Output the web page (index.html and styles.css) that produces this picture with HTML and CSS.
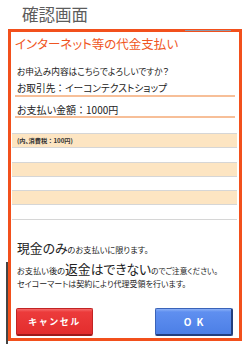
FILE: index.html
```html
<!DOCTYPE html>
<html lang="ja">
<head>
<meta charset="utf-8">
<link rel="stylesheet" href="styles.css">
</head>
<body>
<div class="title">確認画面</div>
<div class="frame">
  <div class="heading">インターネット等の代金支払い</div>
  <div class="question">お申込み内容はこちらでよろしいですか？</div>
  <div class="field f1">お取引先<span class="c">：</span>イーコンテクストショップ</div>
  <div class="field f2">お支払い金額<span class="c">：</span>1000円</div>
  <div class="rows">
    <div class="row beige"><span class="tax">(内、消費税<span class="c">：</span>100円)</span></div>
    <div class="row"></div>
    <div class="row beige"></div>
    <div class="row"></div>
    <div class="row beige"></div>
    <div class="row"></div>
  </div>
  <div class="notice">
    <div class="line n1"><span class="big">現金のみ</span><span class="small">のお支払いに限ります。</span></div>
    <div class="line n2"><span class="small">お支払い後の</span><span class="big">返金はできない</span><span class="small2">のでご注意ください。</span></div>
    <div class="line n3">セイコーマートは契約により代理受領を行います。</div>
  </div>
  <div class="buttons">
    <div class="btn cancel">キャンセル</div>
    <div class="btn ok">OK</div>
  </div>
</div>
</body>
</html>
```
FILE: styles.css
```css
html, body {
  margin: 0;
  padding: 0;
  background: #ffffff;
}
body {
  width: 250px;
  height: 350px;
  overflow: hidden;
  font-family: "Noto Sans CJK JP", "Noto Sans", sans-serif;
  font-feature-settings: "palt";
  color: #222;
}
.c { font-feature-settings: normal; }
.title {
  height: 29px;
  box-sizing: border-box;
  padding: 4px 0 0 22px;
  font-size: 16.5px;
  line-height: 20px;
  color: #5c5c5c;
}
.frame {
  position: relative;
  margin: 0 8px;
  height: 312px;
  box-sizing: border-box;
  border: 3px solid #f2501c;
  display: flex;
  flex-direction: column;
}
.frame::before {
  content: "";
  position: absolute;
  top: -2px;
  left: 174px;
  width: 46px;
  height: 1px;
  background: #8a9ab0;
}
.frame::after {
  content: "";
  position: absolute;
  left: -5px;
  top: 230px;
  width: 2px;
  height: 82px;
  background: #444;
}
.heading {
  height: 24px;
  line-height: 24px;
  padding-left: 4px;
  font-size: 12.5px;
  color: #ef5522;
}
.question {
  margin-top: 8px;
  height: 16px;
  line-height: 16px;
  padding-left: 6px;
  font-size: 8.7px;
}
.field {
  margin: 0 4px 0 4px;
  padding-left: 2px;
  line-height: 13px;
  font-size: 9.7px;
  border-bottom: 2px solid #f7bf98;
}
.f1 { padding-top: 2px; }
.f2 { padding-top: 6px; font-size: 10px; }
.rows {
  margin: 15px 2px 0 1px;
  display: flex;
  flex-direction: column;
  border-bottom: 1px solid #d6d6d6;
}
.row {
  height: 14.3px;
  box-sizing: border-box;
  border-top: 1px solid #d6d6d6;
  padding-left: 5px;
  display: flex;
  align-items: center;
}
.beige { background: #fde5c2; }
.tax {
  font-size: 6.2px;
  font-weight: bold;
  color: #333;
}
.notice {
  margin-top: 19px;
  padding-left: 6px;
}
.line {
  display: flex;
  align-items: baseline;
  white-space: nowrap;
}
.line span { line-height: 1; }
.n1 { height: 18px; }
.n2 { margin-top: 3px; height: 18px; }
.n3 { height: 11px; font-size: 8px; line-height: 11px; }
.n1, .n2 { align-items: baseline; padding-top: 3px; box-sizing: border-box; }
.big { font-size: 12.8px; }
.small { font-size: 8.2px; }
.small2 { font-size: 7.6px; }
.buttons {
  margin-top: 19px;
  padding: 0 6px 0 5px;
  display: flex;
  justify-content: space-between;
}
.btn {
  height: 28px;
  box-sizing: border-box;
  display: flex;
  align-items: center;
  justify-content: center;
  color: #fff;
  font-weight: bold;
  font-feature-settings: normal;
  border-radius: 2px;
}
.cancel {
  width: 77px;
  font-size: 9px;
  letter-spacing: 1.5px;
  background: linear-gradient(#f56a6a 0%, #ec3b3b 12%, #e32d2d 100%);
  border: 1px solid #c22424;
  border-bottom: 2px solid #9e1a1a;
}
.ok {
  width: 78px;
  font-size: 10px;
  letter-spacing: 5px;
  padding-left: 5px;
  background: linear-gradient(#8ab0f7 0%, #5f8ff0 12%, #4c7fe6 100%);
  border: 1px solid #3a63b8;
  border-right: 2px solid #233f7e;
  border-bottom: 2px solid #233f7e;
}
```
